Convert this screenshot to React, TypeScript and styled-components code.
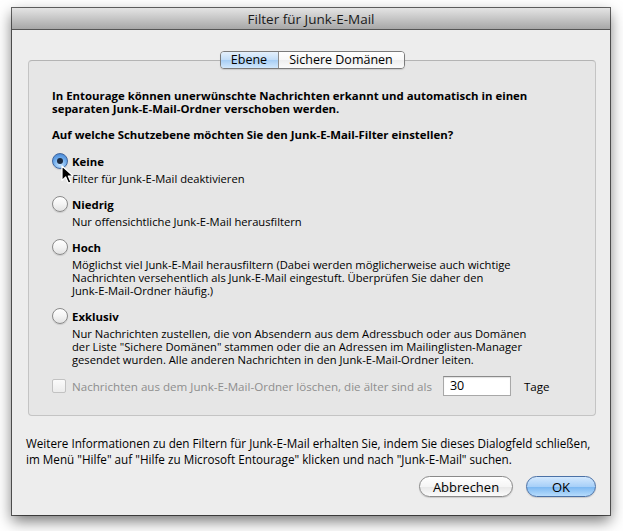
import styled, { createGlobalStyle } from 'styled-components';

const GlobalStyle = createGlobalStyle`
	html, body {
		margin: 0;
		padding: 0;
		background: #ffffff;
	}
	body {
		font-family: 'Open Sans', 'Lucida Grande', 'DejaVu Sans', sans-serif;
		color: #000;
	}
`;

const Page = styled.div`
	width: 623px;
	height: 531px;
	box-sizing: border-box;
	padding: 8px 0 0 12px;
`;

const Window = styled.div`
	width: 598px;
	height: 507px;
	display: flex;
	flex-direction: column;
	background: #ededed;
	box-shadow: 0 0 0 1px rgba(0, 0, 0, 0.6), 0 6px 14px rgba(0, 0, 0, 0.55);
`;

const TitleBar = styled.div`
	height: 21px;
	flex: none;
	display: flex;
	align-items: center;
	justify-content: center;
	background: linear-gradient(#e4e4e4, #c9c9c9 45%, #a7a7a7);
	border-bottom: 1px solid #555;
	font-size: 13.5px;
	color: #1a1a1a;
`;

const Content = styled.div`
	flex: 1;
	display: flex;
	flex-direction: column;
	padding: 21px 14px 0 16px;
`;

const TabBar = styled.div`
	display: flex;
	justify-content: center;
	position: relative;
	z-index: 1;
	margin-bottom: -9px;
`;

const Segmented = styled.div`
	display: flex;
	border: 1px solid #7b7b7b;
	border-radius: 4px;
	overflow: hidden;
	box-shadow: 0 1px 1px rgba(0, 0, 0, 0.12);
`;

const Tab = styled.div<{ $active?: boolean; $w: number }>`
	width: ${(p) => p.$w}px;
	height: 16px;
	line-height: 16px;
	text-align: center;
	font-size: 12.5px;
	background: ${(p) =>
		p.$active
			? 'linear-gradient(#e4f0fc, #c2ddf8 50%, #a6cdf4 51%, #d2e8fc)'
			: 'linear-gradient(#ffffff, #f8f8f8 50%, #eeeeee 51%, #fbfbfb)'};
	& + & {
		border-left: 1px solid #8c8c8c;
	}
`;

const GroupBox = styled.div`
	border: 1px solid #c4c4c4;
	border-top-color: #b4b4b4;
	border-radius: 4px;
	background: #e6e6e6;
	padding: 28px 18px 19px 23px;
	display: flex;
	flex-direction: column;
`;

const Intro = styled.div`
	font-size: 11.4px;
	font-weight: 700;
	line-height: 13px;
	white-space: nowrap;
`;

const Question = styled(Intro)`
	margin-top: 13px;
`;

const Options = styled.div`
	display: flex;
	flex-direction: column;
	gap: 11px;
	margin-top: 12px;
`;

const OptionRow = styled.div`
	display: flex;
	align-items: center;
	gap: 4px;
	height: 16px;
	font-size: 11.4px;
	font-weight: 700;
`;

const Radio = styled.span<{ $checked?: boolean }>`
	position: relative;
	flex: none;
	width: 16px;
	height: 16px;
	box-sizing: border-box;
	border-radius: 50%;
	border: 1px solid ${(p) => (p.$checked ? '#3f66a0' : '#8a8a8a')};
	background: ${(p) =>
		p.$checked
			? 'radial-gradient(circle at 50% 75%, #c6e4ff, #6aa8ea 55%, #3b78c8)'
			: 'linear-gradient(#ffffff, #f4f4f4 50%, #e2e2e2)'};
	box-shadow: 0 1px 1px rgba(0, 0, 0, 0.12);
	&::after {
		content: '';
		display: ${(p) => (p.$checked ? 'block' : 'none')};
		position: absolute;
		left: 4px;
		top: 4px;
		width: 6px;
		height: 6px;
		border-radius: 50%;
		background: #1b2a40;
	}
`;

const Cursor = styled.svg`
	position: absolute;
	left: 8px;
	top: 11px;
	width: 13px;
	height: 20px;
	overflow: visible;
`;

const Desc = styled.div`
	margin-top: 3px;
	padding-left: 20px;
	font-size: 11.2px;
	line-height: 13px;
	white-space: nowrap;
`;

const PurgeRow = styled.div`
	display: flex;
	align-items: center;
	height: 20px;
	margin-top: 10px;
	font-size: 11.6px;
`;

const CheckBox = styled.span`
	flex: none;
	width: 14px;
	height: 14px;
	box-sizing: border-box;
	border: 1px solid #c2c2c2;
	border-radius: 2px;
	background: linear-gradient(#fbfbfb, #ececec);
	margin-right: 6px;
`;

const Disabled = styled.span`
	color: #8e8e8e;
	white-space: nowrap;
`;

const DaysField = styled.div`
	width: 68px;
	height: 20px;
	box-sizing: border-box;
	margin-left: 11px;
	padding-left: 6px;
	background: #fff;
	border: 1px solid #a8a8a8;
	border-top-color: #8a8a8a;
	box-shadow: inset 0 1px 1px rgba(0, 0, 0, 0.12);
	font-size: 12.5px;
	line-height: 18px;
`;

const Unit = styled.span`
	margin-left: 13px;
`;

const Footer = styled.div`
	margin: 19px 0 0 -2px;
	font-size: 11.7px;
	line-height: 16px;
	white-space: nowrap;
`;

const Buttons = styled.div`
	display: flex;
	justify-content: flex-end;
	gap: 13px;
	margin-top: 9px;
`;

const PushButton = styled.div<{ $default?: boolean; $w: number }>`
	width: ${(p) => p.$w}px;
	height: 21px;
	box-sizing: border-box;
	border-radius: 11px;
	border: 1px solid ${(p) => (p.$default ? '#4b71a6' : '#8a8a8a')};
	background: ${(p) =>
		p.$default
			? 'linear-gradient(#d3e8fd, #a8d0f8 50%, #79b6f1 51%, #b7dcfc)'
			: 'linear-gradient(#ffffff, #f5f5f5 50%, #e7e7e7 51%, #fbfbfb)'};
	box-shadow: 0 1px 1px rgba(0, 0, 0, 0.15);
	display: flex;
	align-items: center;
	justify-content: center;
	font-size: 13px;
`;

type Level = {
	title: string;
	lines: string[];
	checked?: boolean;
};

const levels: Level[] = [
	{ title: 'Keine', lines: ['Filter für Junk-E-Mail deaktivieren'], checked: true },
	{ title: 'Niedrig', lines: ['Nur offensichtliche Junk-E-Mail herausfiltern'] },
	{
		title: 'Hoch',
		lines: [
			'Möglichst viel Junk-E-Mail herausfiltern (Dabei werden möglicherweise auch wichtige',
			'Nachrichten versehentlich als Junk-E-Mail eingestuft. Überprüfen Sie daher den',
			'Junk-E-Mail-Ordner häufig.)',
		],
	},
	{
		title: 'Exklusiv',
		lines: [
			'Nur Nachrichten zustellen, die von Absendern aus dem Adressbuch oder aus Domänen',
			'der Liste "Sichere Domänen" stammen oder die an Adressen im Mailinglisten-Manager',
			'gesendet wurden. Alle anderen Nachrichten in den Junk-E-Mail-Ordner leiten.',
		],
	},
];

export default function App() {
	return (
		<>
			<GlobalStyle />
			<Page>
				<Window>
					<TitleBar>Filter für Junk-E-Mail</TitleBar>
					<Content>
						<TabBar>
							<Segmented>
								<Tab $active $w={57}>
									Ebene
								</Tab>
								<Tab $w={125}>Sichere Domänen</Tab>
							</Segmented>
						</TabBar>
						<GroupBox>
							<Intro>
								In Entourage können unerwünschte Nachrichten erkannt und automatisch in einen
								<br />
								separaten Junk-E-Mail-Ordner verschoben werden.
							</Intro>
							<Question>Auf welche Schutzebene möchten Sie den Junk-E-Mail-Filter einstellen?</Question>
							<Options>
								{levels.map((level) => (
									<div key={level.title}>
										<OptionRow>
											<Radio $checked={level.checked}>
												{level.checked && (
													<Cursor viewBox='0 0 13 20'>
														<path
															d='M1 1 L1 15.5 L4.7 11.9 L7.4 18.2 L9.9 17.1 L7.3 11 L12.2 11 Z'
															fill='#000'
															stroke='#fff'
															strokeWidth='1.2'
															strokeLinejoin='round'
														/>
													</Cursor>
												)}
											</Radio>
											{level.title}
										</OptionRow>
										<Desc>
											{level.lines.map((line, i) => (
												<div key={i}>{line}</div>
											))}
										</Desc>
									</div>
								))}
							</Options>
							<PurgeRow>
								<CheckBox />
								<Disabled>Nachrichten aus dem Junk-E-Mail-Ordner löschen, die älter sind als</Disabled>
								<DaysField>30</DaysField>
								<Unit>Tage</Unit>
							</PurgeRow>
						</GroupBox>
						<Footer>
							Weitere Informationen zu den Filtern für Junk-E-Mail erhalten Sie, indem Sie dieses Dialogfeld schließen,
							<br />
							im Menü "Hilfe" auf "Hilfe zu Microsoft Entourage" klicken und nach "Junk-E-Mail" suchen.
						</Footer>
						<Buttons>
							<PushButton $w={94}>Abbrechen</PushButton>
							<PushButton $default $w={70}>
								OK
							</PushButton>
						</Buttons>
					</Content>
				</Window>
			</Page>
		</>
	);
}
